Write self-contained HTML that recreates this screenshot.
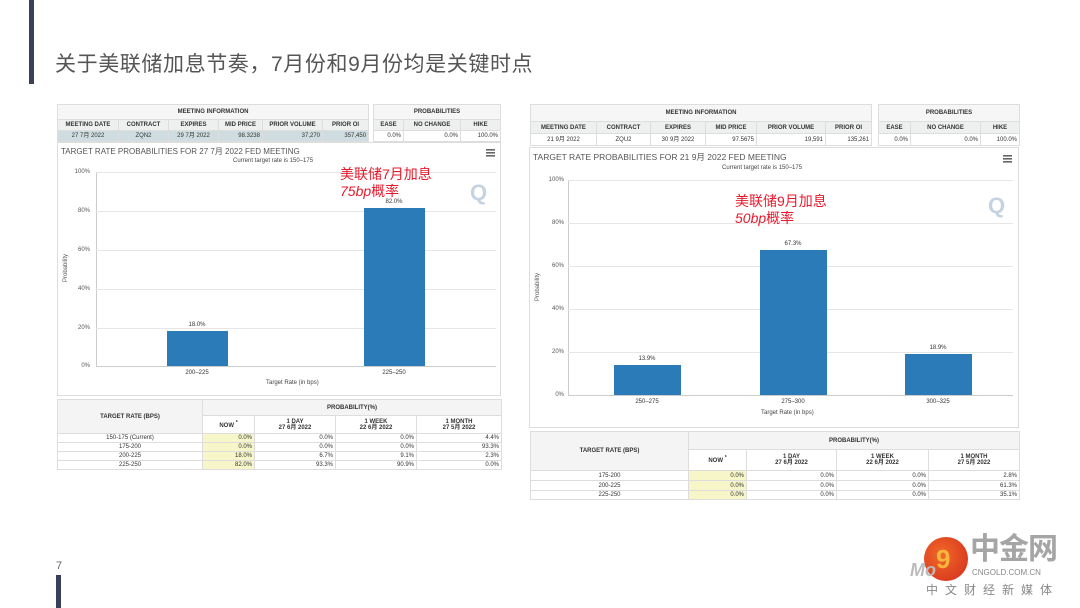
<!DOCTYPE html>
<html><head><meta charset="utf-8"><style>
*{margin:0;padding:0;box-sizing:border-box}
body{width:1080px;height:608px;background:#fff;position:relative;overflow:hidden;font-family:"Liberation Sans","Noto Sans CJK SC",sans-serif;color:#333}
.a{position:absolute}
table{border-collapse:collapse;table-layout:fixed;position:absolute;font-size:6px}
td{border:1px solid #ddd;text-align:center;white-space:nowrap;overflow:hidden;line-height:1}
.h td{background:#eef0f0;font-weight:bold;color:#333}
.d td{background:#cfdde0}
.r{text-align:right;padding-right:2px}
.y{background:#f6f6c8}
.panel{position:absolute;border:1px solid #ddd;background:#fff}
.grid{position:absolute;height:1px;background:#e6e6e6}
.yl{position:absolute;font-size:6px;color:#555;text-align:right;width:24px}
.bar{position:absolute;background:#2b7bb9}
.bl{position:absolute;font-size:6px;color:#333;text-align:center;width:60px}
.red{position:absolute;color:#e8192c;font-size:14px;line-height:17px;font-family:"Liberation Sans","Noto Sans CJK SC",sans-serif}
</style></head><body>
<div class="a" style="left:29px;top:0;width:5px;height:84px;background:#3a4059"></div>
<div class="a" style="left:55px;top:48px;font-size:21px;color:#555;letter-spacing:0.6px;white-space:nowrap">关于美联储加息节奏，7月份和9月份均是关键时点</div>
<div class="a" style="left:56px;top:575px;width:5px;height:33px;background:#3a4059"></div>
<div class="a" style="left:56px;top:560px;font-size:11px;color:#666">7</div>

<!-- LEFT top -->
<table style="left:57px;top:104px;width:311px">
<colgroup><col style="width:61px"><col style="width:50px"><col style="width:50px"><col style="width:44px"><col style="width:60px"><col style="width:46px"></colgroup>
<tr class="h"><td colspan="6" style="height:15px;background:#f6f6f6">MEETING INFORMATION</td></tr>
<tr class="h"><td style="height:11px">MEETING DATE</td><td>CONTRACT</td><td>EXPIRES</td><td>MID PRICE</td><td>PRIOR VOLUME</td><td>PRIOR OI</td></tr>
<tr class="d"><td style="height:11px">27 7月 2022</td><td>ZQN2</td><td>29 7月 2022</td><td class="r">98.3238</td><td class="r">37,270</td><td class="r">357,450</td></tr>
</table>
<table style="left:373px;top:104px;width:127px">
<colgroup><col style="width:30px"><col style="width:57px"><col style="width:40px"></colgroup>
<tr class="h"><td colspan="3" style="height:15px;background:#f6f6f6">PROBABILITIES</td></tr>
<tr class="h"><td style="height:11px">EASE</td><td>NO CHANGE</td><td>HIKE</td></tr>
<tr><td class="r" style="height:11px">0.0%</td><td class="r">0.0%</td><td class="r">100.0%</td></tr>
</table>
<div class="panel" style="left:57px;top:142px;width:444px;height:254px"></div>
<div class="a" style="left:61px;top:146px;font-size:8px;color:#555;white-space:nowrap">TARGET RATE PROBABILITIES FOR 27 7月 2022 FED MEETING</div>
<div class="a" style="left:233px;top:158px;font-size:6px;color:#444">Current target rate is 150–175</div>
<svg class="a" style="left:486px;top:149px" width="9" height="8"><rect y="0" width="9" height="1.6" fill="#666"/><rect y="3" width="9" height="1.6" fill="#666"/><rect y="6" width="9" height="1.6" fill="#666"/></svg>
<div class="a" style="left:96px;top:172px;width:1px;height:195px;background:#ccc"></div>
<div class="grid" style="left:96px;top:172px;width:400px"></div>
<div class="grid" style="left:96px;top:211px;width:400px"></div>
<div class="grid" style="left:96px;top:250px;width:400px"></div>
<div class="grid" style="left:96px;top:289px;width:400px"></div>
<div class="grid" style="left:96px;top:328px;width:400px"></div>
<div class="grid" style="left:96px;top:366px;width:400px;background:#ccc"></div>
<div class="yl" style="left:66px;top:169px">100%</div>
<div class="yl" style="left:66px;top:208px">80%</div>
<div class="yl" style="left:66px;top:247px">60%</div>
<div class="yl" style="left:66px;top:286px">40%</div>
<div class="yl" style="left:66px;top:325px">20%</div>
<div class="yl" style="left:66px;top:363px">0%</div>
<div class="a" style="left:52px;top:265px;font-size:6px;color:#555;transform:rotate(-90deg)">Probability</div>
<div class="bar" style="left:167px;top:331px;width:61px;height:35px"></div>
<div class="bar" style="left:364px;top:208px;width:61px;height:158px"></div>
<div class="bl" style="left:167px;top:322px">18.0%</div>
<div class="bl" style="left:364px;top:199px">82.0%</div>
<div class="bl" style="left:167px;top:370px">200–225</div>
<div class="bl" style="left:364px;top:370px">225–250</div>
<div class="a" style="left:266px;top:380px;font-size:6px;color:#444">Target Rate (in bps)</div>
<div class="a" style="left:470px;top:180px;font-size:22px;font-weight:bold;color:#c5d3e0">Q</div>
<div class="red" style="left:340px;top:166px">美联储7月加息<br><i>75bp</i>概率</div>

<table style="left:57px;top:399px;width:444px">
<colgroup><col style="width:145px"><col style="width:52px"><col style="width:81px"><col style="width:81px"><col style="width:85px"></colgroup>
<tr class="h"><td rowspan="2" style="height:34px;background:#f4f4f4">TARGET RATE (BPS)</td><td colspan="4" style="height:16px;background:#f4f4f4">PROBABILITY(%)</td></tr>
<tr class="h"><td style="height:18px;background:#fff">NOW <sup>*</sup></td><td style="background:#fff">1 DAY<br>27 6月 2022</td><td style="background:#fff">1 WEEK<br>22 6月 2022</td><td style="background:#fff">1 MONTH<br>27 5月 2022</td></tr>
<tr><td style="height:9px">150-175 (Current)</td><td class="r y">0.0%</td><td class="r">0.0%</td><td class="r">0.0%</td><td class="r">4.4%</td></tr>
<tr><td style="height:9px">175-200</td><td class="r y">0.0%</td><td class="r">0.0%</td><td class="r">0.0%</td><td class="r">93.3%</td></tr>
<tr><td style="height:9px">200-225</td><td class="r y">18.0%</td><td class="r">6.7%</td><td class="r">9.1%</td><td class="r">2.3%</td></tr>
<tr><td style="height:9px">225-250</td><td class="r y">82.0%</td><td class="r">93.3%</td><td class="r">90.9%</td><td class="r">0.0%</td></tr>
</table>

<!-- RIGHT top -->
<table style="left:530px;top:104px;width:341px">
<colgroup><col style="width:66px"><col style="width:54px"><col style="width:55px"><col style="width:51px"><col style="width:69px"><col style="width:46px"></colgroup>
<tr class="h"><td colspan="6" style="height:17px;background:#f6f6f6">MEETING INFORMATION</td></tr>
<tr class="h"><td style="height:12px">MEETING DATE</td><td>CONTRACT</td><td>EXPIRES</td><td>MID PRICE</td><td>PRIOR VOLUME</td><td>PRIOR OI</td></tr>
<tr><td style="height:12px">21 9月 2022</td><td>ZQU2</td><td>30 9月 2022</td><td class="r">97.5675</td><td class="r">19,591</td><td class="r">135,261</td></tr>
</table>
<table style="left:878px;top:104px;width:141px">
<colgroup><col style="width:32px"><col style="width:70px"><col style="width:39px"></colgroup>
<tr class="h"><td colspan="3" style="height:17px;background:#f6f6f6">PROBABILITIES</td></tr>
<tr class="h"><td style="height:12px">EASE</td><td>NO CHANGE</td><td>HIKE</td></tr>
<tr><td class="r" style="height:12px">0.0%</td><td class="r">0.0%</td><td class="r">100.0%</td></tr>
</table>
<div class="panel" style="left:529px;top:147px;width:490px;height:281px"></div>
<div class="a" style="left:533px;top:151px;font-size:8.5px;color:#555;white-space:nowrap">TARGET RATE PROBABILITIES FOR 21 9月 2022 FED MEETING</div>
<div class="a" style="left:722px;top:165px;font-size:6px;color:#444">Current target rate is 150–175</div>
<svg class="a" style="left:1003px;top:155px" width="9" height="8"><rect y="0" width="9" height="1.6" fill="#666"/><rect y="3" width="9" height="1.6" fill="#666"/><rect y="6" width="9" height="1.6" fill="#666"/></svg>
<div class="a" style="left:568px;top:180px;width:1px;height:216px;background:#ccc"></div>
<div class="grid" style="left:568px;top:180px;width:445px"></div>
<div class="grid" style="left:568px;top:223px;width:445px"></div>
<div class="grid" style="left:568px;top:266px;width:445px"></div>
<div class="grid" style="left:568px;top:309px;width:445px"></div>
<div class="grid" style="left:568px;top:352px;width:445px"></div>
<div class="grid" style="left:568px;top:395px;width:445px;background:#ccc"></div>
<div class="yl" style="left:540px;top:177px">100%</div>
<div class="yl" style="left:540px;top:220px">80%</div>
<div class="yl" style="left:540px;top:263px">60%</div>
<div class="yl" style="left:540px;top:306px">40%</div>
<div class="yl" style="left:540px;top:349px">20%</div>
<div class="yl" style="left:540px;top:392px">0%</div>
<div class="a" style="left:524px;top:284px;font-size:6px;color:#555;transform:rotate(-90deg)">Probability</div>
<div class="bar" style="left:614px;top:365px;width:67px;height:30px"></div>
<div class="bar" style="left:760px;top:250px;width:67px;height:145px"></div>
<div class="bar" style="left:905px;top:354px;width:67px;height:41px"></div>
<div class="bl" style="left:617px;top:356px">13.9%</div>
<div class="bl" style="left:763px;top:241px">67.3%</div>
<div class="bl" style="left:908px;top:345px">18.9%</div>
<div class="bl" style="left:617px;top:399px">250–275</div>
<div class="bl" style="left:763px;top:399px">275–300</div>
<div class="bl" style="left:908px;top:399px">300–325</div>
<div class="a" style="left:761px;top:410px;font-size:6px;color:#444">Target Rate (in bps)</div>
<div class="a" style="left:988px;top:193px;font-size:22px;font-weight:bold;color:#c5d3e0">Q</div>
<div class="red" style="left:735px;top:193px">美联储9月加息<br><i>50bp</i>概率</div>

<table style="left:530px;top:431px;width:489px">
<colgroup><col style="width:158px"><col style="width:58px"><col style="width:90px"><col style="width:92px"><col style="width:91px"></colgroup>
<tr class="h"><td rowspan="2" style="height:39px;background:#f4f4f4">TARGET RATE (BPS)</td><td colspan="4" style="height:18px;background:#f4f4f4">PROBABILITY(%)</td></tr>
<tr class="h"><td style="height:21px;background:#fff">NOW <sup>*</sup></td><td style="background:#fff">1 DAY<br>27 6月 2022</td><td style="background:#fff">1 WEEK<br>22 6月 2022</td><td style="background:#fff">1 MONTH<br>27 5月 2022</td></tr>
<tr><td style="height:10px">175-200</td><td class="r y">0.0%</td><td class="r">0.0%</td><td class="r">0.0%</td><td class="r">2.8%</td></tr>
<tr><td style="height:10px">200-225</td><td class="r y">0.0%</td><td class="r">0.0%</td><td class="r">0.0%</td><td class="r">61.3%</td></tr>
<tr><td style="height:9px">225-250</td><td class="r y">0.0%</td><td class="r">0.0%</td><td class="r">0.0%</td><td class="r">35.1%</td></tr>
</table>

<!-- logo -->
<div class="a" style="left:924px;top:537px;width:44px;height:44px;border-radius:50%;background:radial-gradient(circle at 40% 40%,#f06a2a,#d42a1a)"></div>
<div class="a" style="left:936px;top:545px;font-size:26px;font-weight:bold;color:#f6b73c;line-height:28px">9</div>
<div class="a" style="left:910px;top:560px;font-size:18px;font-weight:bold;font-style:italic;color:#bbb">Mo</div>
<div class="a" style="left:970px;top:533px;font-size:30px;font-weight:bold;color:#a5a5a5;line-height:34px;letter-spacing:-1px">中金网</div>
<div class="a" style="left:972px;top:568px;font-size:8px;color:#888">CNGOLD.COM.CN</div>
<div class="a" style="left:926px;top:581px;font-size:12px;color:#888;letter-spacing:7px">中文财经新媒体</div>
</body></html>
